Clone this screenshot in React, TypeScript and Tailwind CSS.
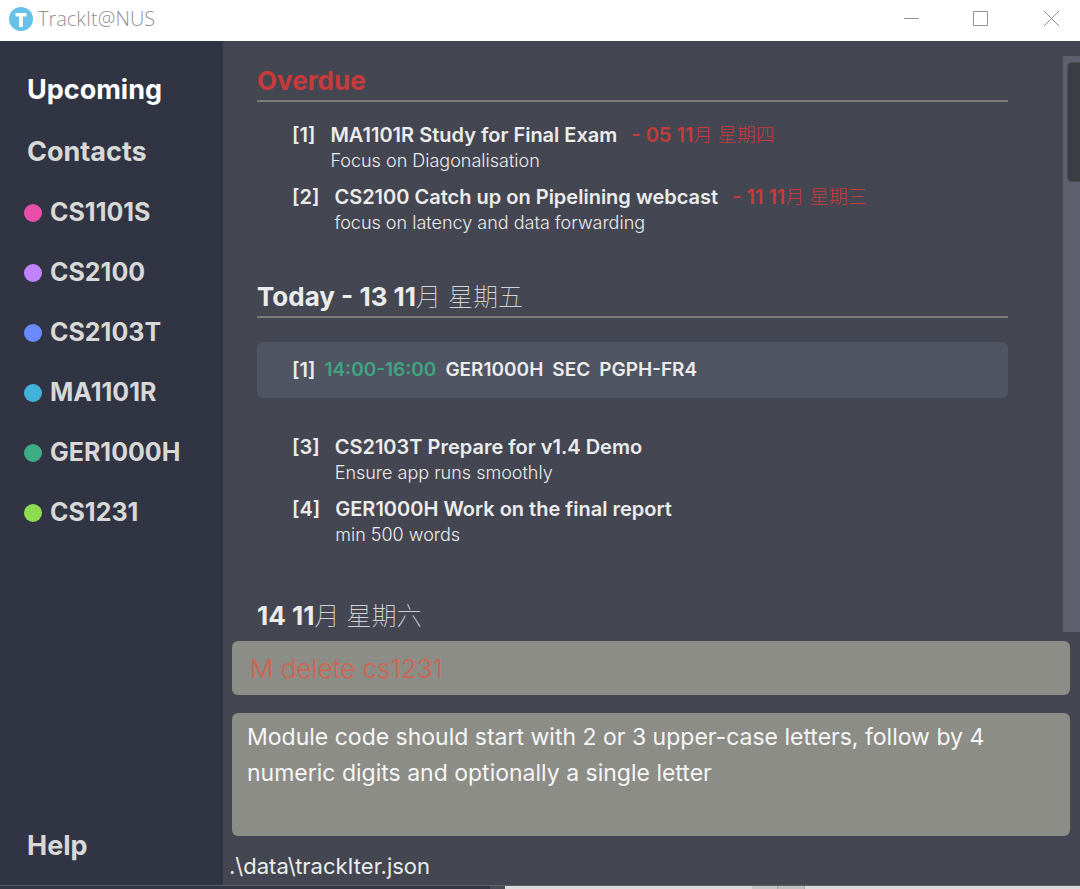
import React from "react";

type Task = { index: number; title: string; description: string; due?: [string, string] };
type Lesson = { index: number; time: string; module: string; kind: string; venue: string };
type Day = { heading: string; cjk?: string; overdue?: boolean; lessons?: Lesson[]; tasks: Task[] };

const modules = [
  { code: "CS1101S", dot: "bg-[#e74fab]" },
  { code: "CS2100", dot: "bg-[#c283ff]" },
  { code: "CS2103T", dot: "bg-[#6a8bff]" },
  { code: "MA1101R", dot: "bg-[#41b3db]" },
  { code: "GER1000H", dot: "bg-[#3eac85]" },
  { code: "CS1231", dot: "bg-[#8ddc50]" },
];

const days: Day[] = [
  {
    heading: "Overdue",
    overdue: true,
    tasks: [
      { index: 1, title: "MA1101R Study for Final Exam", description: "Focus on Diagonalisation", due: ["- 05 11", "月 星期四"] },
      { index: 2, title: "CS2100 Catch up on Pipelining webcast", description: "focus on latency and data forwarding", due: ["- 11 11", "月 星期三"] },
    ],
  },
  {
    heading: "Today - 13 11",
    cjk: "月 星期五",
    lessons: [{ index: 1, time: "14:00-16:00", module: "GER1000H", kind: "SEC", venue: "PGPH-FR4" }],
    tasks: [
      { index: 3, title: "CS2103T Prepare for v1.4 Demo", description: "Ensure app runs smoothly" },
      { index: 4, title: "GER1000H Work on the final report", description: "min 500 words" },
    ],
  },
  { heading: "14 11", cjk: "月 星期六", tasks: [] },
];

function TitleBar() {
  return (
    <header className="flex h-[41px] shrink-0 items-center bg-white pb-1 pl-[9px] text-[#929292]">
      <svg width="24" height="24" viewBox="0 0 24 24" aria-hidden="true">
        <circle cx="12" cy="12" r="12" fill="#67c1e8" />
        <path d="M6.5 6h11v3.600h-3.600V20h-3.800V9.600H6.500z" fill="#fff" />
      </svg>
      <h1 className="ml-[5px] flex-1 font-['Open_Sans','Noto_Sans',sans-serif] text-[20px] font-light">TrackIt@NUS</h1>
      <div className="flex">
        <button aria-label="Minimize" className="flex h-9 w-[69px] items-center justify-center">
          <svg width="15" height="15" viewBox="0 0 15 15" stroke="currentColor"><path d="M0 7.500H15" /></svg>
        </button>
        <button aria-label="Maximize" className="flex h-9 w-[69px] items-center justify-center">
          <svg width="15" height="15" viewBox="0 0 15 15" fill="none" stroke="currentColor"><path d="M.5.5h14v14H.5z" /></svg>
        </button>
        <button aria-label="Close" className="flex h-9 w-[65px] items-center justify-center pl-[7px]">
          <svg width="15" height="15" viewBox="0 0 15 15" stroke="currentColor"><path d="M0 0 15 15M15 0 0 15" /></svg>
        </button>
      </div>
    </header>
  );
}

function Sidebar() {
  return (
    <nav className="flex w-[223px] shrink-0 flex-col bg-[#313442] pt-[18px] pb-[9px] text-[25px] font-bold text-[#d8d8d8]">
      <button className="h-[62px] pl-[27px] text-left text-[27px] text-white">Upcoming</button>
      <button className="h-[62px] pl-[27px] text-left text-[27px]">Contacts</button>
      {modules.map((m) => (
        <button key={m.code} className="flex h-[60px] items-center gap-2 pl-6 text-left">
          <span className={`size-[18px] rounded-full ${m.dot}`} />
          {m.code}
        </button>
      ))}
      <button className="mt-auto h-[60px] pl-[27px] text-left text-[27px]">Help</button>
    </nav>
  );
}

function TaskRow({ task }: { task: Task }) {
  return (
    <li className="flex gap-[15px]">
      <span className="text-[20px] leading-7 font-semibold">[{task.index}]</span>
      <div>
        <h3 className="text-[20px] leading-7 font-semibold">
          {task.title}
          {task.due && (
            <span className="ml-[14px] text-[#c83a3b]">
              {task.due[0]}
              <span className="text-[19px] leading-none font-light">{task.due[1]}</span>
            </span>
          )}
        </h3>
        <p className="text-[18px] leading-6 font-light">{task.description}</p>
      </div>
    </li>
  );
}

function DaySection({ day }: { day: Day }) {
  return (
    <section className={day.lessons ? "mb-[54px]" : "mb-[47px]"}>
      <h2 className={`border-b-2 border-[#7d7c79] pb-1 text-[26px] leading-[30px] font-bold ${day.overdue ? "text-[#c83a3b]" : ""}`}>
        {day.heading}
        {day.cjk && <span className="text-[25px] leading-none font-thin">{day.cjk}</span>}
      </h2>
      {day.lessons?.map((l) => (
        <div key={l.index} className="mt-6 mb-[35px] flex h-14 items-center gap-[9px] rounded-md bg-[#505563] pl-[35px] text-[19px] font-semibold">
          <span className="text-[20px]">[{l.index}]</span>
          <time className="text-[#3fa581]">{l.time}</time>
          <span>{l.module}</span>
          <span>{l.kind}</span>
          <span>{l.venue}</span>
        </div>
      ))}
      <ul className={`flex flex-col gap-[10px] pl-[35px] ${day.lessons ? "" : "mt-[19px]"}`}>
        {day.tasks.map((t) => (
          <TaskRow key={t.index} task={t} />
        ))}
      </ul>
    </section>
  );
}

export default function App() {
  return (
    <div className="flex h-screen flex-col overflow-hidden bg-[#444752] font-['Inter','Noto_Sans_CJK_TC',sans-serif] text-[#ececec]">
      <TitleBar />
      <div className="flex min-h-0 flex-1">
        <Sidebar />
        <main className="flex min-w-0 flex-1 flex-col">
          <div className="mt-[15px] flex min-h-0 flex-1">
            <div className="min-w-0 flex-1 overflow-hidden pt-[10px] pr-[55px] pl-[34px]">
              {days.map((d) => (
                <DaySection key={d.heading} day={d} />
              ))}
            </div>
            <div className="w-[17px] shrink-0 bg-[#5f606d] pt-[6px] pl-1">
              <div className="h-[120px] rounded-l-[5px] border border-r-0 border-[#4b4c55] bg-[#3c3d42]" />
            </div>
          </div>
          <div className="mt-[9px] mr-[10px] ml-[9px] flex flex-col gap-[18px]">
            <input
              aria-label="Command"
              defaultValue="M delete cs1231"
              className="h-[54px] w-full rounded-md bg-[#8c8d87] px-[18px] text-[26px] font-light text-[#d4624b] outline-none"
            />
            <textarea
              aria-label="Result"
              readOnly
              defaultValue="Module code should start with 2 or 3 upper-case letters, follow by 4 numeric digits and optionally a single letter"
              className="block h-[123px] w-full resize-none overflow-hidden rounded-md bg-[#8c8d87] px-[15px] pt-[6px] text-[23px] leading-9 text-[#f6f6f6] outline-none"
            />
          </div>
          <footer className="flex h-[49px] items-center pt-3 pl-[6px] text-[22px]">.\data\trackIter.json</footer>
        </main>
      </div>
      <div aria-hidden="true" className="flex h-1 shrink-0 border-t border-[#5d5f66] bg-[#dcdcdc]">
        <div className="w-[490px] bg-[#343643]" />
        <div className="w-[15px] bg-[#4a4c55]" />
        <div className="w-[247px]" />
        <div className="w-[26px] border-r border-[#a5a5a5] bg-[#c6c6c6]" />
        <div className="w-[27px] border-r border-[#a5a5a5] bg-[#c0c0c0]" />
      </div>
    </div>
  );
}
